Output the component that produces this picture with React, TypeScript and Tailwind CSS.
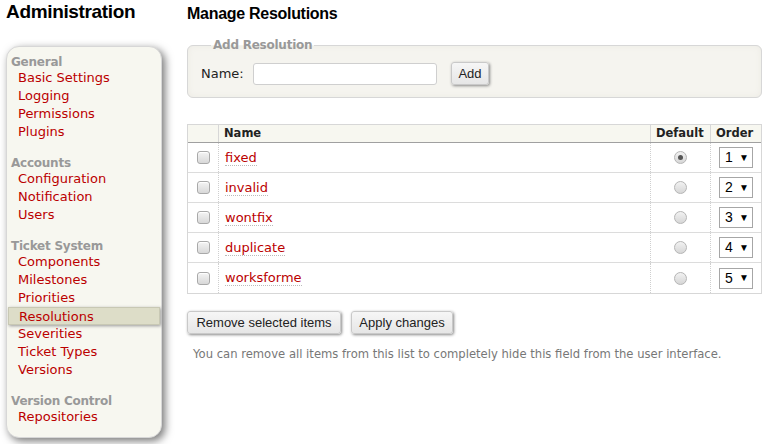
import React from "react";

const groups: { title: string; items: string[] }[] = [
  { title: "General", items: ["Basic Settings", "Logging", "Permissions", "Plugins"] },
  { title: "Accounts", items: ["Configuration", "Notification", "Users"] },
  {
    title: "Ticket System",
    items: ["Components", "Milestones", "Priorities", "Resolutions", "Severities", "Ticket Types", "Versions"],
  },
  { title: "Version Control", items: ["Repositories"] },
];

const rows = ["fixed", "invalid", "wontfix", "duplicate", "worksforme"];

function Checkbox() {
  return (
    <span className="block w-[13px] h-[13px] rounded-[3px] border border-[#a9a9a9] bg-gradient-to-b from-[#f4f4f4] to-[#d8d8d8] shadow-[inset_0_1px_1px_#fff]" />
  );
}

function Radio({ checked }: { checked?: boolean }) {
  return (
    <span className="flex items-center justify-center w-[13px] h-[13px] rounded-full border border-[#b5b5b5] bg-gradient-to-b from-[#f2f2f2] to-[#d6d6d6]">
      {checked ? <span className="block w-[5px] h-[5px] rounded-full bg-[#555]" /> : null}
    </span>
  );
}

function Select({ value }: { value: number }) {
  return (
    <span className="flex items-center w-[34px] h-[21px] border border-[#a6a6a6] bg-white font-['Liberation_Sans',Arial,sans-serif] text-[14px] text-black">
      <span className="pl-[5px] w-[18px]">{value}</span>
      <span className="text-[10px] leading-none pl-[1px]">▼</span>
    </span>
  );
}

export default function App() {
  return (
    <div className="w-[768px] h-[444px] overflow-hidden bg-white text-black font-['DejaVu_Sans',Verdana,sans-serif] text-[13px]">
      <div className="flex">
        {/* Left column */}
        <div className="w-[187px] shrink-0 pl-[6px]">
          <h1 className="pt-[1px] font-['Liberation_Sans',Arial,sans-serif] font-bold text-[19px] leading-[22px] tracking-[-0.018em] text-black">
            Administration
          </h1>
          <div className="mt-[23px] w-[156px] h-[392px] rounded-[13px] border border-[#d7d7d7] bg-[#f7f7f0] shadow-[3px_3px_8px_0_#777] pt-[8px]">
            {groups.map((g, gi) => (
              <div key={g.title} className={gi === 0 ? "" : "mt-[15px]"}>
                <div className="pl-[4px] text-[12px] leading-[14px] font-bold tracking-[-0.02em] text-[#999]">
                  {g.title}
                </div>
                <ul>
                  {g.items.map((it) =>
                    it === "Resolutions" ? (
                      <li
                        key={it}
                        className="mx-[1px] h-[18px] leading-[17px] pl-[10px] bg-[#ddddc8] border border-[#c8c8b4] shadow-[1px_1px_3px_0_#999] text-[#b00]"
                      >
                        {it}
                      </li>
                    ) : (
                      <li key={it} className="h-[18px] leading-[18px] pl-[11px] text-[#b00]">
                        {it}
                      </li>
                    )
                  )}
                </ul>
              </div>
            ))}
          </div>
        </div>

        {/* Content */}
        <div className="w-[575px] shrink-0">
          <h2 className="pt-[5px] font-['Liberation_Sans',Arial,sans-serif] font-bold text-[16px] leading-[18px] tracking-[-0.018em] text-black">
            Manage Resolutions
          </h2>

          <fieldset className="mt-[14px] rounded-[6px] border border-[#d7d7d7] bg-[#f5f4ef] shadow-[inset_0_0_6px_#ecebe4] px-[13px] pt-[9px] pb-[12px]">
            <legend className="ml-[10px] px-[2px] text-[12px] leading-[16px] font-bold tracking-[-0.02em] text-[#999]">
              Add Resolution
            </legend>
            <div className="flex items-center h-[23px]">
              <span className="w-[52px] text-[13px] text-[#222]">Name:</span>
              <span className="block w-[184px] h-[22px] rounded-[3px] border border-[#cfcfcf] bg-white" />
              <button className="ml-[14px] w-[38px] h-[23px] rounded-[3px] border border-[#c9c9c9] bg-gradient-to-b from-[#f6f6f6] to-[#e6e6e6] shadow-[1px_1px_3px_0_#888] font-['Liberation_Sans',Arial,sans-serif] text-[13px] text-[#222]">
                Add
              </button>
            </div>
          </fieldset>

          {/* Table */}
          <div className="mt-[26px] border border-[#d7d7d7]">
            <div className="flex h-[18px] bg-[#f7f7f0] border-b border-[#a0a0a0] text-[11.5px] leading-[17px] font-bold text-[#222]">
              <div className="w-[31px] border-r border-[#d7d7d7]" />
              <div className="w-[432px] pl-[5px] border-r border-[#d7d7d7]">Name</div>
              <div className="w-[60px] pl-[5px] border-r border-[#d7d7d7]">Default</div>
              <div className="flex-1 pl-[5px]">Order</div>
            </div>
            {rows.map((r, i) => (
              <div
                key={r}
                className={
                  "flex h-[30px] " + (i < rows.length - 1 ? "border-b border-[#dcdcdc]" : "h-[29px]")
                }
              >
                <div className="w-[31px] flex items-center justify-center border-r border-dotted border-[#cfcfcf]">
                  <Checkbox />
                </div>
                <div className="w-[432px] flex items-center pl-[6px] border-r border-dotted border-[#cfcfcf]">
                  <span className="text-[#b00] leading-[15px] border-b border-dotted border-[#bbb]">{r}</span>
                </div>
                <div className="w-[60px] flex items-center justify-center border-r border-dotted border-[#cfcfcf]">
                  <Radio checked={i === 0} />
                </div>
                <div className="flex-1 flex items-center pl-[8px]">
                  <Select value={i + 1} />
                </div>
              </div>
            ))}
          </div>

          <div className="mt-[17px] flex gap-[10px]">
            <button className="w-[154px] h-[23px] rounded-[3px] border border-[#c9c9c9] bg-gradient-to-b from-[#f6f6f6] to-[#e6e6e6] shadow-[1px_1px_3px_0_#888] font-['Liberation_Sans',Arial,sans-serif] text-[13px] text-[#222]">
              Remove selected items
            </button>
            <button className="w-[102px] h-[23px] rounded-[3px] border border-[#c9c9c9] bg-gradient-to-b from-[#f6f6f6] to-[#e6e6e6] shadow-[1px_1px_3px_0_#888] font-['Liberation_Sans',Arial,sans-serif] text-[13px] text-[#222]">
              Apply changes
            </button>
          </div>

          <p className="mt-[13px] ml-[6px] text-[11.6px] leading-[14px] text-[#777] whitespace-nowrap">
            You can remove all items from this list to completely hide this field from the user interface.
          </p>
        </div>
      </div>
    </div>
  );
}
